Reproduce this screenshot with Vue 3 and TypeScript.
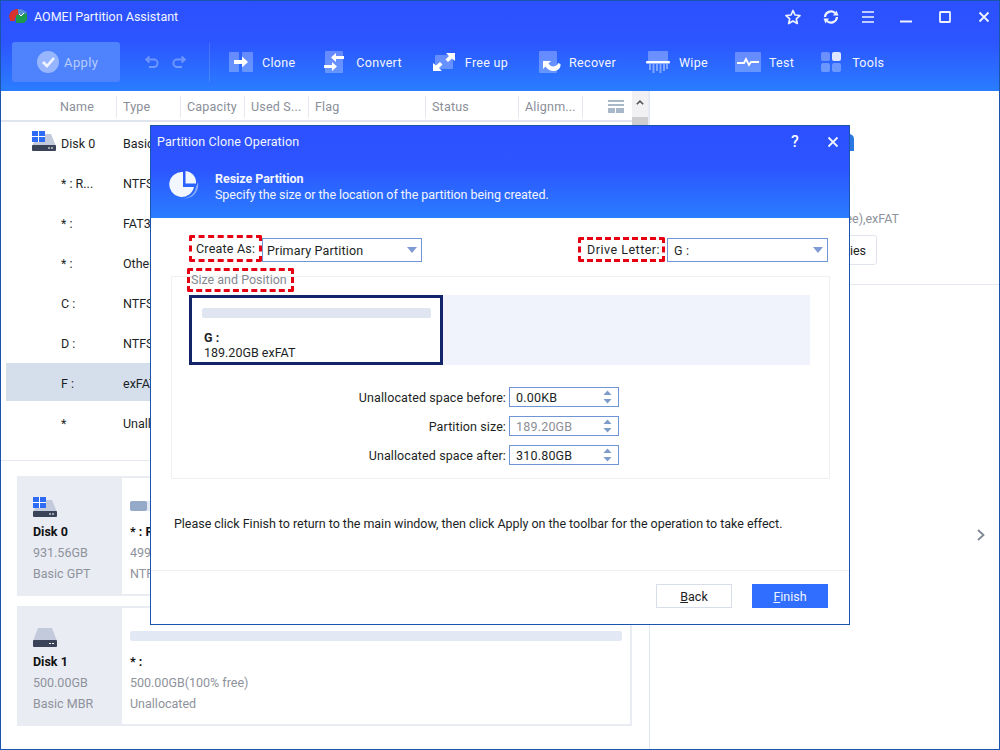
<script setup lang="ts">
const columns = [
  { label: 'Name', width: 116 },
  { label: 'Type', width: 64 },
  { label: 'Capacity', width: 64 },
  { label: 'Used S...', width: 64 },
  { label: 'Flag', width: 117 },
  { label: 'Status', width: 93 },
  { label: 'Alignm...', width: 64 },
]
const rows = [
  { name: '* : R...', type: 'NTFS' },
  { name: '* :', type: 'FAT32' },
  { name: '* :', type: 'Other' },
  { name: 'C :', type: 'NTFS' },
  { name: 'D :', type: 'NTFS' },
  { name: 'F :', type: 'exFAT', selected: true },
  { name: '*', type: 'Unallocated' },
]
const spins = [
  { label: 'Unallocated space before:', value: '0.00KB', off: false },
  { label: 'Partition size:', value: '189.20GB', off: true },
  { label: 'Unallocated space after:', value: '310.80GB', off: false },
]
</script>

<template>
  <div class="window">
    <header class="top">
      <div class="titlebar">
        <svg class="logo" width="20" height="17" viewBox="0 0 20 17">
          <path d="M1 8 Q2 2 9 1 L11 1 L10 5 L12 8 L7 10 L7 13 L2 13 Z" fill="#d8322e" />
          <path d="M8 7 L19 5 L19 12 L16 15 L8 15 Z" fill="#1d9a4e" />
          <path d="M10 1 Q16 1 19 5 L13 7 L10 5 Z" fill="#5b8fd0" />
          <path d="M11 6 L13 8 L16 5" fill="none" stroke="#fff" stroke-width="1" />
        </svg>
        <span class="app-title">AOMEI Partition Assistant</span>
        <div class="win-controls">
          <svg width="16" height="16" viewBox="0 0 16 16"><path d="M8 1.5 L10 6 L15 6.5 L11.3 9.8 L12.3 14.5 L8 12 L3.7 14.5 L4.7 9.8 L1 6.5 L6 6 Z" fill="none" stroke="#eef3ff" stroke-width="1.7" stroke-linejoin="round" /></svg>
          <svg width="16" height="16" viewBox="0 0 16 16"><path d="M2 8 A6 6 0 0 1 12 4" fill="none" stroke="#eef3ff" stroke-width="2.2" /><path d="M14 8 A6 6 0 0 1 4 12" fill="none" stroke="#eef3ff" stroke-width="2.2" /><path d="M10 6.5 L15.5 6.5 L13.5 1.5 Z M6 9.5 L.5 9.5 L2.5 14.5 Z" fill="#eef3ff" /></svg>
          <svg width="12" height="12" viewBox="0 0 12 12"><path d="M0 1 H12 M0 6 H12 M0 11 H12" stroke="#eef3ff" stroke-width="1.7" /></svg>
          <svg width="12" height="12" viewBox="0 0 12 12"><path d="M0 10.5 H12" stroke="#eef3ff" stroke-width="2" /></svg>
          <svg width="12" height="12" viewBox="0 0 12 12"><rect x="1" y="1" width="10" height="10" rx=".5" fill="none" stroke="#eef3ff" stroke-width="1.8" /></svg>
          <svg width="12" height="12" viewBox="0 0 12 12"><path d="M1.5 1.5 L10.5 10.5 M10.5 1.5 L1.5 10.5" stroke="#eef3ff" stroke-width="1.8" /></svg>
        </div>
      </div>
      <div class="toolbar">
        <button class="apply">
          <svg width="22" height="22" viewBox="0 0 22 22"><circle cx="11" cy="11" r="11" fill="#fff" fill-opacity=".42" /><path d="M6 11 L10 15 L17 7" fill="none" stroke="#fff" stroke-opacity=".85" stroke-width="2.6" /></svg>
          <span>Apply</span>
        </button>
        <div class="history">
          <svg width="15" height="12" viewBox="0 0 15 12"><path d="M1 3.5 H10 A4 4 0 0 1 10 11 H4 M4.5 .5 L1 3.5 L4.5 6.5" fill="none" stroke="#fff" stroke-opacity=".32" stroke-width="1.8" /></svg>
          <svg width="15" height="12" viewBox="0 0 15 12"><path d="M14 3.5 H5 A4 4 0 0 0 5 11 H11 M10.5 .5 L14 3.5 L10.5 6.5" fill="none" stroke="#fff" stroke-opacity=".32" stroke-width="1.8" /></svg>
        </div>
        <div class="tool clone">
          <svg width="24" height="20" viewBox="0 0 24 20"><rect width="10" height="20" rx="1" fill="#fff" fill-opacity=".28" /><rect x="13" width="11" height="20" rx="1" fill="#fff" fill-opacity=".28" /><path d="M5 8 H13 V4.5 L19 10 L13 15.5 V12 H5 Z" fill="#fff" /></svg>
          <span>Clone</span>
        </div>
        <div class="tool convert">
          <svg width="20" height="22" viewBox="0 0 20 22"><rect x="1" width="18" height="22" rx="1" fill="#fff" fill-opacity=".28" /><path d="M20 5 H12 V2 L7 6.5 L12 11 V8 H20 Z M0 14 H8 V11 L13 15.5 L8 20 V17 H0 Z" fill="#fff" /></svg>
          <span>Convert</span>
        </div>
        <div class="tool freeup">
          <svg width="22" height="18" viewBox="0 0 22 18"><rect x="2" y="2" width="18" height="14" rx="1" fill="#fff" fill-opacity=".28" /><path d="M13 0 H22 V8 L19 5.5 L15 9 L12.5 6.5 L16 3 Z M9 18 H0 V10 L3 12.5 L7 9 L9.5 11.5 L6 15 Z" fill="#fff" /></svg>
          <span>Free up</span>
        </div>
        <div class="tool recover">
          <svg width="22" height="22" viewBox="0 0 22 22"><rect width="18" height="22" rx="1" fill="#fff" fill-opacity=".28" /><path d="M4 10 L12 10 L9.500 12.500 C11 15 14 16 16 15 C18 14.500 19 13 19 12 L21.500 13 C22 17 19 20 15 20 C11 20 8 18 6.500 15.500 L4 18 Z" fill="#fff" /></svg>
          <span>Recover</span>
        </div>
        <div class="tool wipe">
          <svg width="24" height="23" viewBox="0 0 24 23"><rect x="2" width="20" height="10" rx="1" fill="#fff" fill-opacity=".3" /><rect y="10" width="24" height="2.4" rx="1" fill="#fff" /><path d="M4 13 V19 M7.5 13 V22 M11 13 V20 M14.500 13 V22 M18 13 V20 M21 13 V18" stroke="#fff" stroke-opacity=".4" stroke-width="2" /></svg>
          <span>Wipe</span>
        </div>
        <div class="tool test">
          <svg width="26" height="20" viewBox="0 0 26 20"><rect width="26" height="20" rx="1" fill="#fff" fill-opacity=".28" /><path d="M2 11 H9 L11 7 L14 13 L16 10 H24" fill="none" stroke="#fff" stroke-width="1.8" /></svg>
          <span>Test</span>
        </div>
        <div class="tool tools">
          <svg width="20" height="20" viewBox="0 0 20 20"><rect width="9" height="9" rx="2" fill="#fff" fill-opacity=".3" /><rect x="11" width="9" height="9" rx="2" fill="#fff" fill-opacity=".85" /><rect y="11" width="9" height="9" rx="2" fill="#fff" fill-opacity=".3" /><rect x="11" y="11" width="9" height="9" rx="2" fill="#fff" fill-opacity=".3" /></svg>
          <span>Tools</span>
        </div>
      </div>
    </header>

    <main class="main">
      <section class="left">
        <div class="table-area">
          <div class="list">
            <div class="thead">
              <span v-for="c in columns" :key="c.label" class="th" :style="{ width: c.width + 'px' }">{{ c.label }}</span>
              <svg class="view-icon" width="16" height="13" viewBox="0 0 16 13"><path d="M0 1 H16 M0 5 H16" stroke="#a9b7cb" stroke-width="2" /><rect y="8" width="7" height="5" fill="#a9b7cb" /><rect x="8" y="8" width="8" height="5" fill="#a9b7cb" /></svg>
            </div>
            <div class="row disk-row">
              <svg class="row-disk" width="24" height="20" viewBox="0 0 24 20">
                <path d="M6 3 H19 L24 15 H0 Z" fill="#c3cadb" />
                <rect y="14" width="24" height="6" rx="1" fill="#3a4357" />
                <rect x="16" y="16.500" width="2" height="1" fill="#fff" />
                <rect x="19" y="16.500" width="2" height="1" fill="#fff" />
                <rect width="13" height="11" fill="#2f6cf6" />
                <path d="M6.500 0 V11 M0 5.500 H13" stroke="#fff" />
              </svg>
              <span class="cell-name">Disk 0</span>
              <span class="cell-type">Basic GPT</span>
            </div>
            <div v-for="(r, i) in rows" :key="i" class="row" :class="{ selected: r.selected }">
              <span class="cell-name">{{ r.name }}</span>
              <span class="cell-type">{{ r.type }}</span>
            </div>
          </div>
          <div class="scrollbar">
            <svg width="8" height="5" viewBox="0 0 8 5"><path d="M.8 4.300 L4 1.200 L7.200 4.300" fill="none" stroke="#555" stroke-width="1.600" /></svg>
            <div class="thumb"></div>
          </div>
        </div>
        <div class="cards">
          <article class="card">
            <div class="card-disk">
              <svg width="24" height="20" viewBox="0 0 24 20">
                <path d="M6 3 H19 L24 15 H0 Z" fill="#c3cadb" />
                <rect y="14" width="24" height="6" rx="1" fill="#3a4357" />
                <rect x="16" y="16.500" width="2" height="1" fill="#fff" />
                <rect x="19" y="16.500" width="2" height="1" fill="#fff" />
                <rect width="13" height="11" fill="#2f6cf6" />
                <path d="M6.500 0 V11 M0 5.500 H13" stroke="#fff" />
              </svg>
              <strong>Disk 0</strong>
              <span>931.56GB</span>
              <span>Basic GPT</span>
            </div>
            <div class="card-part">
              <div class="usage"><i class="used"></i></div>
              <strong>* : R</strong>
              <span>499.00MB</span>
              <span>NTFS</span>
            </div>
          </article>
          <article class="card">
            <div class="card-disk">
              <svg width="24" height="20" viewBox="0 0 24 20">
                <path d="M5 1 H19 L24 14 H0 Z" fill="#c3cadb" />
                <rect y="13" width="24" height="7" rx="1" fill="#3a4357" />
                <rect x="16" y="16" width="2" height="1" fill="#fff" />
                <rect x="19" y="16" width="2" height="1" fill="#fff" />
              </svg>
              <strong>Disk 1</strong>
              <span>500.00GB</span>
              <span>Basic MBR</span>
            </div>
            <div class="card-part">
              <div class="usage"></div>
              <strong>* :</strong>
              <span>500.00GB(100% free)</span>
              <span>Unallocated</span>
            </div>
          </article>
        </div>
      </section>
      <aside class="right">
        <div class="info">
          <svg class="info-pie" width="9" height="17" viewBox="0 0 9 17"><path d="M0 0 H4 A5 5 0 0 1 9 5 V17 H0 Z" fill="#2a78e2" /></svg>
          <p class="info-text">189.20GB(99% free),exFAT</p>
          <button class="props">Properties</button>
        </div>
        <svg class="chevron" width="8" height="12" viewBox="0 0 8 12"><path d="M1 1 L6.500 6 L1 11" fill="none" stroke="#7d8794" stroke-width="1.800" /></svg>
      </aside>
    </main>

    <div class="dialog">
      <div class="dlg-head">
        <div class="dlg-title">
          <span>Partition Clone Operation</span>
          <div class="dlg-controls">
            <span class="help">?</span>
            <svg width="12" height="12" viewBox="0 0 12 12"><path d="M1.500 1.500 L10.500 10.500 M10.500 1.500 L1.500 10.500" stroke="#eef3ff" stroke-width="1.800" /></svg>
          </div>
        </div>
        <div class="dlg-banner">
          <svg width="32" height="32" viewBox="0 0 32 32">
            <path d="M14 3 A12.500 12.500 0 1 0 25 18 L14 18 Z" fill="#f2f6ff" />
            <path d="M16.500 2 A11.500 11.500 0 0 1 27 14.500 L16.500 14.500 Z" fill="#f2f6ff" />
            <path d="M29 13 A14 14 0 0 1 11 29 A13 13 0 0 0 27 18 Z" fill="#fff" fill-opacity=".45" />
          </svg>
          <div class="banner-text">
            <strong>Resize Partition</strong>
            <p>Specify the size or the location of the partition being created.</p>
          </div>
        </div>
      </div>
      <div class="dlg-body">
        <div class="form-row">
          <div class="field">
            <label class="marked create-label">Create As:</label>
            <div class="select primary">Primary Partition<i class="arrow"></i></div>
          </div>
          <div class="field">
            <label class="marked drive-label">Drive Letter:</label>
            <div class="select drive">G :<i class="arrow"></i></div>
          </div>
        </div>
        <fieldset class="group">
          <legend class="marked group-label">Size and Position</legend>
          <div class="track">
            <div class="block">
              <div class="block-bar"></div>
              <strong>G :</strong>
              <span>189.20GB exFAT</span>
            </div>
          </div>
          <div class="spins">
            <div v-for="s in spins" :key="s.label" class="spin-row">
              <span>{{ s.label }}</span>
              <div class="spin" :class="{ off: s.off }">
                {{ s.value }}
                <svg width="9" height="14" viewBox="0 0 9 14"><path d="M4.500 .5 L8.500 5 H.5 Z M.5 9 H8.500 L4.500 13.500 Z" fill="#7f9bc9" /></svg>
              </div>
            </div>
          </div>
        </fieldset>
        <p class="note">Please click Finish to return to the main window, then click Apply on the toolbar for the operation to take effect.</p>
      </div>
      <div class="dlg-foot">
        <button class="btn back"><u>B</u>ack</button>
        <button class="btn finish"><u>F</u>inish</button>
      </div>
    </div>
  </div>
</template>

<style>
html, body { margin: 0; padding: 0; background: #fff; }
</style>

<style scoped>
.window {
  position: relative;
  width: 1000px;
  height: 750px;
  box-sizing: border-box;
  border: 1px solid #1a55ad;
  display: flex;
  flex-direction: column;
  overflow: hidden;
  font-family: Roboto, "Liberation Sans", sans-serif;
  font-size: 12.5px;
  color: #1c1f26;
  background: #fff;
}
button { font-family: inherit; font-size: inherit; }
p { margin: 0; }
.top {
  height: 90px;
  flex: none;
  background: linear-gradient(#2c50ff 0%, #2c55ff 45%, #2a7dff 100%);
  color: #fff;
}
.titlebar {
  height: 31px;
  display: flex;
  align-items: center;
  padding-left: 7px;
}
.logo { margin-right: 6px; }
.app-title { font-size: 12.5px; color: #f2f5ff; }
.win-controls {
  margin-left: auto;
  display: flex;
  align-items: center;
  width: 214px;
  padding-left: 4px;
}
.win-controls svg:nth-child(1) { margin-right: 22px; }
.win-controls svg:nth-child(2) { margin-right: 23px; }
.win-controls svg:nth-child(3) { margin-right: 26px; }
.win-controls svg:nth-child(4) { margin-right: 27px; }
.win-controls svg:nth-child(5) { margin-right: 27px; }
.toolbar {
  height: 59px;
  display: flex;
  align-items: flex-start;
  padding-left: 11px;
  padding-top: 10px;
  box-sizing: border-box;
}
.apply {
  width: 108px;
  height: 40px;
  border: 0;
  border-radius: 3px;
  background: #4f82fd;
  color: #b9cdfd;
  display: flex;
  align-items: center;
  padding: 0 0 0 25px;
  gap: 5px;
  font-size: 13px;
  letter-spacing: .4px;
}
.history {
  width: 90px;
  height: 40px;
  box-sizing: border-box;
  display: flex;
  align-items: center;
  gap: 11px;
  padding-left: 25px;
  border-right: 1px solid rgba(255, 255, 255, .13);
}
.tool {
  display: flex;
  align-items: center;
  height: 40px;
  font-size: 12.5px;
  letter-spacing: .3px;
  color: #f3f6ff;
}
.clone { margin-left: 19px; gap: 9px; }
.convert { margin-left: 29px; gap: 12px; }
.freeup { margin-left: 31px; gap: 10px; }
.recover { margin-left: 31px; gap: 8px; }
.wipe { margin-left: 30px; gap: 9px; }
.test { margin-left: 27px; gap: 8px; }
.tools { margin-left: 27px; gap: 11px; }

.main { flex: 1; display: flex; min-height: 0; }
.left {
  width: 648px;
  flex: none;
  border-right: 1px solid #e0e6f2;
  display: flex;
  flex-direction: column;
}
.table-area {
  display: flex;
  height: 369px;
  flex: none;
  border-bottom: 1px solid #e3e8f1;
}
.list { width: 631px; flex: none; }
.scrollbar {
  flex: 1;
  background: #f1f1f3;
  display: flex;
  flex-direction: column;
  align-items: center;
  padding-top: 9px;
  border-right: 1px solid #e8ebf1;
}
.thumb { width: 100%; height: 60px; background: #cdcdcd; margin-top: 12px; }
.thead {
  height: 29px;
  display: flex;
  align-items: center;
  border-bottom: 2px solid #dfe4ee;
}
.th {
  box-sizing: border-box;
  height: 22px;
  line-height: 22px;
  margin-top: 2px;
  padding-left: 6px;
  border-right: 1px solid #e5e8ee;
  color: #8a8e98;
  letter-spacing: .2px;
  white-space: nowrap;
  overflow: hidden;
}
.th:first-child { padding-left: 59px; }
.view-icon { margin-left: 25px; margin-top: 2px; }
.row {
  box-sizing: border-box;
  height: 38px;
  margin-left: 5px;
  margin-bottom: 2px;
  display: flex;
  align-items: center;
  padding: 2px 0 0 55px;
  position: relative;
}
.row.selected { background: #d5dfec; }
.disk-row { margin-top: 1px; }
.row-disk { position: absolute; left: 26px; top: 8px; }
.cell-name { width: 62px; }
.cell-type { white-space: nowrap; }

.cards {
  padding: 15px 0 0 16px;
  display: flex;
  flex-direction: column;
  gap: 10px;
}
.card {
  width: 615px;
  height: 120px;
  display: flex;
  box-sizing: border-box;
  border: 2px solid #e9ecf3;
  background: #fff;
}
.card-disk {
  width: 103px;
  margin: -2px 0;
  background: #e9ecf3;
  box-sizing: border-box;
  padding: 21px 0 0 14px;
  display: flex;
  flex-direction: column;
  color: #8e929b;
  line-height: 21px;
}
.card-disk svg { margin-bottom: 4px; }
.card-disk strong, .card-part strong { color: #111; font-weight: 700; }
.card-part {
  flex: 1;
  padding: 23px 8px 0 8px;
  display: flex;
  flex-direction: column;
  color: #8e929b;
  line-height: 21px;
}
.usage {
  height: 10px;
  border-radius: 2px;
  background: #e3e9f4;
  margin-bottom: 10px;
}
.used { display: block; width: 17px; height: 10px; border-radius: 2px; background: #95a9c9; }

.right { flex: 1; position: relative; }
.info {
  display: flex;
  flex-direction: column;
  align-items: flex-end;
  padding: 120px 100px 0 0;
  border-bottom: 1px solid #e3e8f1;
  height: 194px;
  box-sizing: border-box;
}
.info-pie { position: absolute; left: 195px; top: 43px; }
.info-text { color: #8e929b; line-height: 16px; white-space: nowrap; }
.props {
  margin-top: 8px;
  margin-right: 22px;
  height: 30px;
  width: 90px;
  padding: 0 10px 0 0;
  text-align: right;
  background: #fff;
  border: 1px solid #dfe4ee;
  border-radius: 3px;
  color: #222;
}
.chevron { position: absolute; right: 14px; top: 438px; }

.dialog {
  position: absolute;
  left: 149px;
  top: 124px;
  width: 700px;
  height: 500px;
  box-sizing: border-box;
  border: 1px solid #1a55ad;
  background: #fff;
  display: flex;
  flex-direction: column;
}
.dlg-head {
  height: 92px;
  flex: none;
  background: linear-gradient(#2c50ff 0%, #2c55ff 45%, #2a7dff 100%);
  color: #f2f5ff;
}
.dlg-title {
  height: 31px;
  display: flex;
  align-items: center;
  padding: 0 10px 0 6px;
  letter-spacing: .1px;
}
.dlg-controls { margin-left: auto; display: flex; align-items: center; gap: 28px; }
.help { font-size: 16px; font-weight: 500; }
.dlg-banner {
  display: flex;
  align-items: flex-start;
  padding: 12px 0 0 18px;
  gap: 14px;
  line-height: 16px;
}
.banner-text { padding-top: 2px; letter-spacing: -.05px; }
.dlg-banner strong { font-weight: 700; display: block; }
.dlg-body { flex: 1; display: flex; flex-direction: column; padding: 17px 19px 0 20px; min-height: 0; }
.form-row { display: flex; justify-content: space-between; height: 27px; align-items: flex-end; padding-right: 2px; }
.field { display: flex; align-items: flex-end; }
.marked {
  box-sizing: border-box;
  border: 3px dashed #e60012;
  border-radius: 2px;
}
.create-label {
  width: 73px;
  height: 27px;
  line-height: 22px;
  padding-left: 4px;
  margin-left: 18px;
  letter-spacing: .2px;
  white-space: nowrap;
}
.drive-label {
  width: 87px;
  height: 25px;
  line-height: 20px;
  padding-left: 6px;
  margin-right: 2px;
  letter-spacing: .5px;
  white-space: nowrap;
}
.select {
  position: relative;
  box-sizing: border-box;
  height: 24px;
  line-height: 23px;
  border: 1px solid #6f95d6;
  padding-left: 4px;
  letter-spacing: .15px;
}
.primary { width: 160px; }
.drive { width: 161px; padding-left: 6px; }
.arrow {
  position: absolute;
  right: 4px;
  top: 8px;
  width: 0;
  height: 0;
  border-left: 5px solid transparent;
  border-right: 5px solid transparent;
  border-top: 6px solid #7f9bd4;
}
.group {
  margin: 14px 0 0;
  padding: 0;
  border: 1px solid #eef0f4;
  height: 203px;
  box-sizing: border-box;
  position: relative;
  min-width: 0;
}
.group-label {
  position: absolute;
  left: 15px;
  top: -9px;
  width: 107px;
  height: 24px;
  line-height: 17px;
  padding: 0 0 0 1px;
  color: #85888f;
  white-space: nowrap;
}
.track {
  margin: 18px 19px 0 17px;
  height: 70px;
  background: #f0f3fb;
}
.block {
  box-sizing: border-box;
  width: 254px;
  height: 70px;
  border: 3px solid #14246a;
  background: #fff;
  display: flex;
  flex-direction: column;
  padding: 10px 9px 0 10px;
  line-height: 15.5px;
}
.block strong { margin: 12px 0 0 2px; }
.block span { margin-top: -1px; padding-left: 2px; }
.block-bar { height: 10px; border-radius: 2px; background: #e0e6f1; }
.spins { margin-top: 22px; display: flex; flex-direction: column; gap: 9px; }
.spin-row {
  display: flex;
  justify-content: flex-end;
  align-items: center;
  gap: 3px;
  padding-right: 210px;
  height: 20px;
  letter-spacing: .1px;
}
.spin {
  box-sizing: border-box;
  width: 110px;
  height: 20px;
  border: 1px solid #6f95d6;
  display: flex;
  align-items: center;
  justify-content: space-between;
  padding: 0 6px;
  letter-spacing: .2px;
}
.spin.off { color: #8c8f96; }
.note { margin-top: 37px; margin-left: 3px; white-space: nowrap; letter-spacing: -.03px; }
.dlg-foot {
  height: 54px;
  flex: none;
  border-top: 1px solid #eceef3;
  display: flex;
  justify-content: flex-end;
  align-items: flex-start;
  gap: 20px;
  padding: 13px 21px 0 0;
  box-sizing: border-box;
}
.btn { width: 76px; height: 24px; box-sizing: border-box; padding: 0; }
.back { background: #fff; border: 1px solid #d7deea; color: #222; }
.finish { background: #2f6eff; border: 0; color: #f0f4ff; }
</style>
